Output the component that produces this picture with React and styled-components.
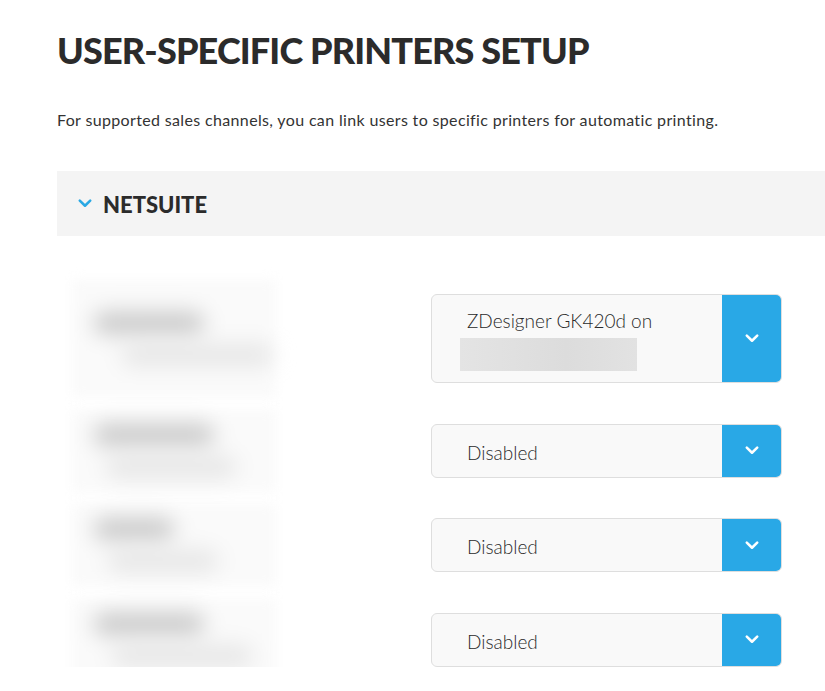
import React from "react";
import styled, { createGlobalStyle } from "styled-components";

const users = [
  { printer: "ZDesigner GK420d on", redacted: true, a: 110, b: 150, off: 28 },
  { printer: "Disabled", a: 120, b: 130, off: 12 },
  { printer: "Disabled", a: 80, b: 110, off: 14 },
  { printer: "Disabled", a: 110, b: 140, off: 18 },
];

const Chevron = ({ size = 14, color = "#fff", width = 2.6 }) => (
  <svg width={size} height={size * 0.62} viewBox="0 0 14 9" fill="none">
    <path d="M1.6 1.6l5.4 5.4 5.4-5.4" stroke={color} strokeWidth={width} strokeLinecap="round" strokeLinejoin="round" />
  </svg>
);

const App = () => {
  return (
    <>
      <GlobalStyle />
      <Page>
        <Title>USER-SPECIFIC PRINTERS SETUP</Title>
        <Intro>
          For supported sales channels, you can link users to specific printers for automatic printing.
        </Intro>
        <ChannelHeader>
          <Chevron size={14} color="#29a8e4" width={2.6} />
          <ChannelName>NETSUITE</ChannelName>
        </ChannelHeader>
        <UserList>
          {users.map((u, i) => (
            <UserRow key={i}>
              <UserBlur>
                <BlurLine $w={u.a} $shade="#c9c9c9" />
                <BlurLine $w={u.b} $shade="#e6e6e6" $off={u.off} />
              </UserBlur>
              <Select>
                <SelectValue>
                  <span>{u.printer}</span>
                  {u.redacted && <Redacted />}
                </SelectValue>
                <SelectButton>
                  <Chevron />
                </SelectButton>
              </Select>
            </UserRow>
          ))}
        </UserList>
      </Page>
    </>
  );
};

const GlobalStyle = createGlobalStyle`
  body {
    margin: 0;
    background: #fff;
    font-family: "Lato", "Liberation Sans", sans-serif;
    color: #2f2f2f;
  }
`;

const Page = styled.div`
  padding: 28px 0 0 57px;
  overflow: hidden;
`;

const Title = styled.h1`
  margin: 0;
  font-size: 36px;
  font-weight: 900;
  letter-spacing: -0.85px;
  line-height: 44px;
  color: #2b2b2b;
`;

const Intro = styled.p`
  margin: 37px 0 0;
  font-size: 16px;
  font-weight: 400;
  letter-spacing: 0.35px;
  line-height: 22px;
  color: #333;
`;

const ChannelHeader = styled.div`
  margin-top: 40px;
  height: 65px;
  background: #f4f4f4;
  display: flex;
  align-items: center;
  gap: 11px;
  padding-left: 21px;
`;

const ChannelName = styled.h2`
  margin: 2px 0 0;
  font-size: 22px;
  font-weight: 900;
  letter-spacing: 0;
  color: #2b2b2b;
`;

const UserList = styled.div`
  margin-top: 58px;
  padding-left: 15px;
  display: flex;
  flex-direction: column;
  gap: 40.6px;
`;

const UserRow = styled.div`
  display: flex;
  align-items: center;
`;

const UserBlur = styled.div`
  box-sizing: border-box;
  width: 204px;
  margin-right: 155px;
  align-self: stretch;
  margin-top: -14px;
  margin-bottom: -14px;
  background: #fafafa;
  filter: blur(6px);
  display: flex;
  flex-direction: column;
  justify-content: center;
  gap: 10px;
  padding-left: 22px;
`;

const BlurLine = styled.div`
  width: ${(p) => p.$w}px;
  height: 22px;
  margin-left: ${(p) => p.$off || 0}px;
  background: ${(p) => p.$shade};
  border-radius: 11px;
  filter: blur(9px);
`;

const Select = styled.div`
  width: 351px;
  display: flex;
  border: 1px solid #dedede;
  border-radius: 6px;
  background: #f9f9f9;
  overflow: hidden;
  box-sizing: border-box;
`;

const SelectValue = styled.div`
  flex: 1;
  min-height: 52px;
  padding: 14px 0 11px 35px;
  box-sizing: border-box;
  font-size: 19px;
  font-weight: 300;
  color: #2a2a2a;
  display: flex;
  flex-direction: column;
  justify-content: center;
`;

const Redacted = styled.div`
  width: 177px;
  height: 33px;
  margin: 6px 0 0 -7px;
  background: linear-gradient(90deg, #e4e4e4, #dcdcdc 60%, #e2e2e2);
`;

const SelectButton = styled.div`
  width: 59px;
  background: #29a8e6;
  display: flex;
  align-items: center;
  justify-content: center;
`;

export default App;
